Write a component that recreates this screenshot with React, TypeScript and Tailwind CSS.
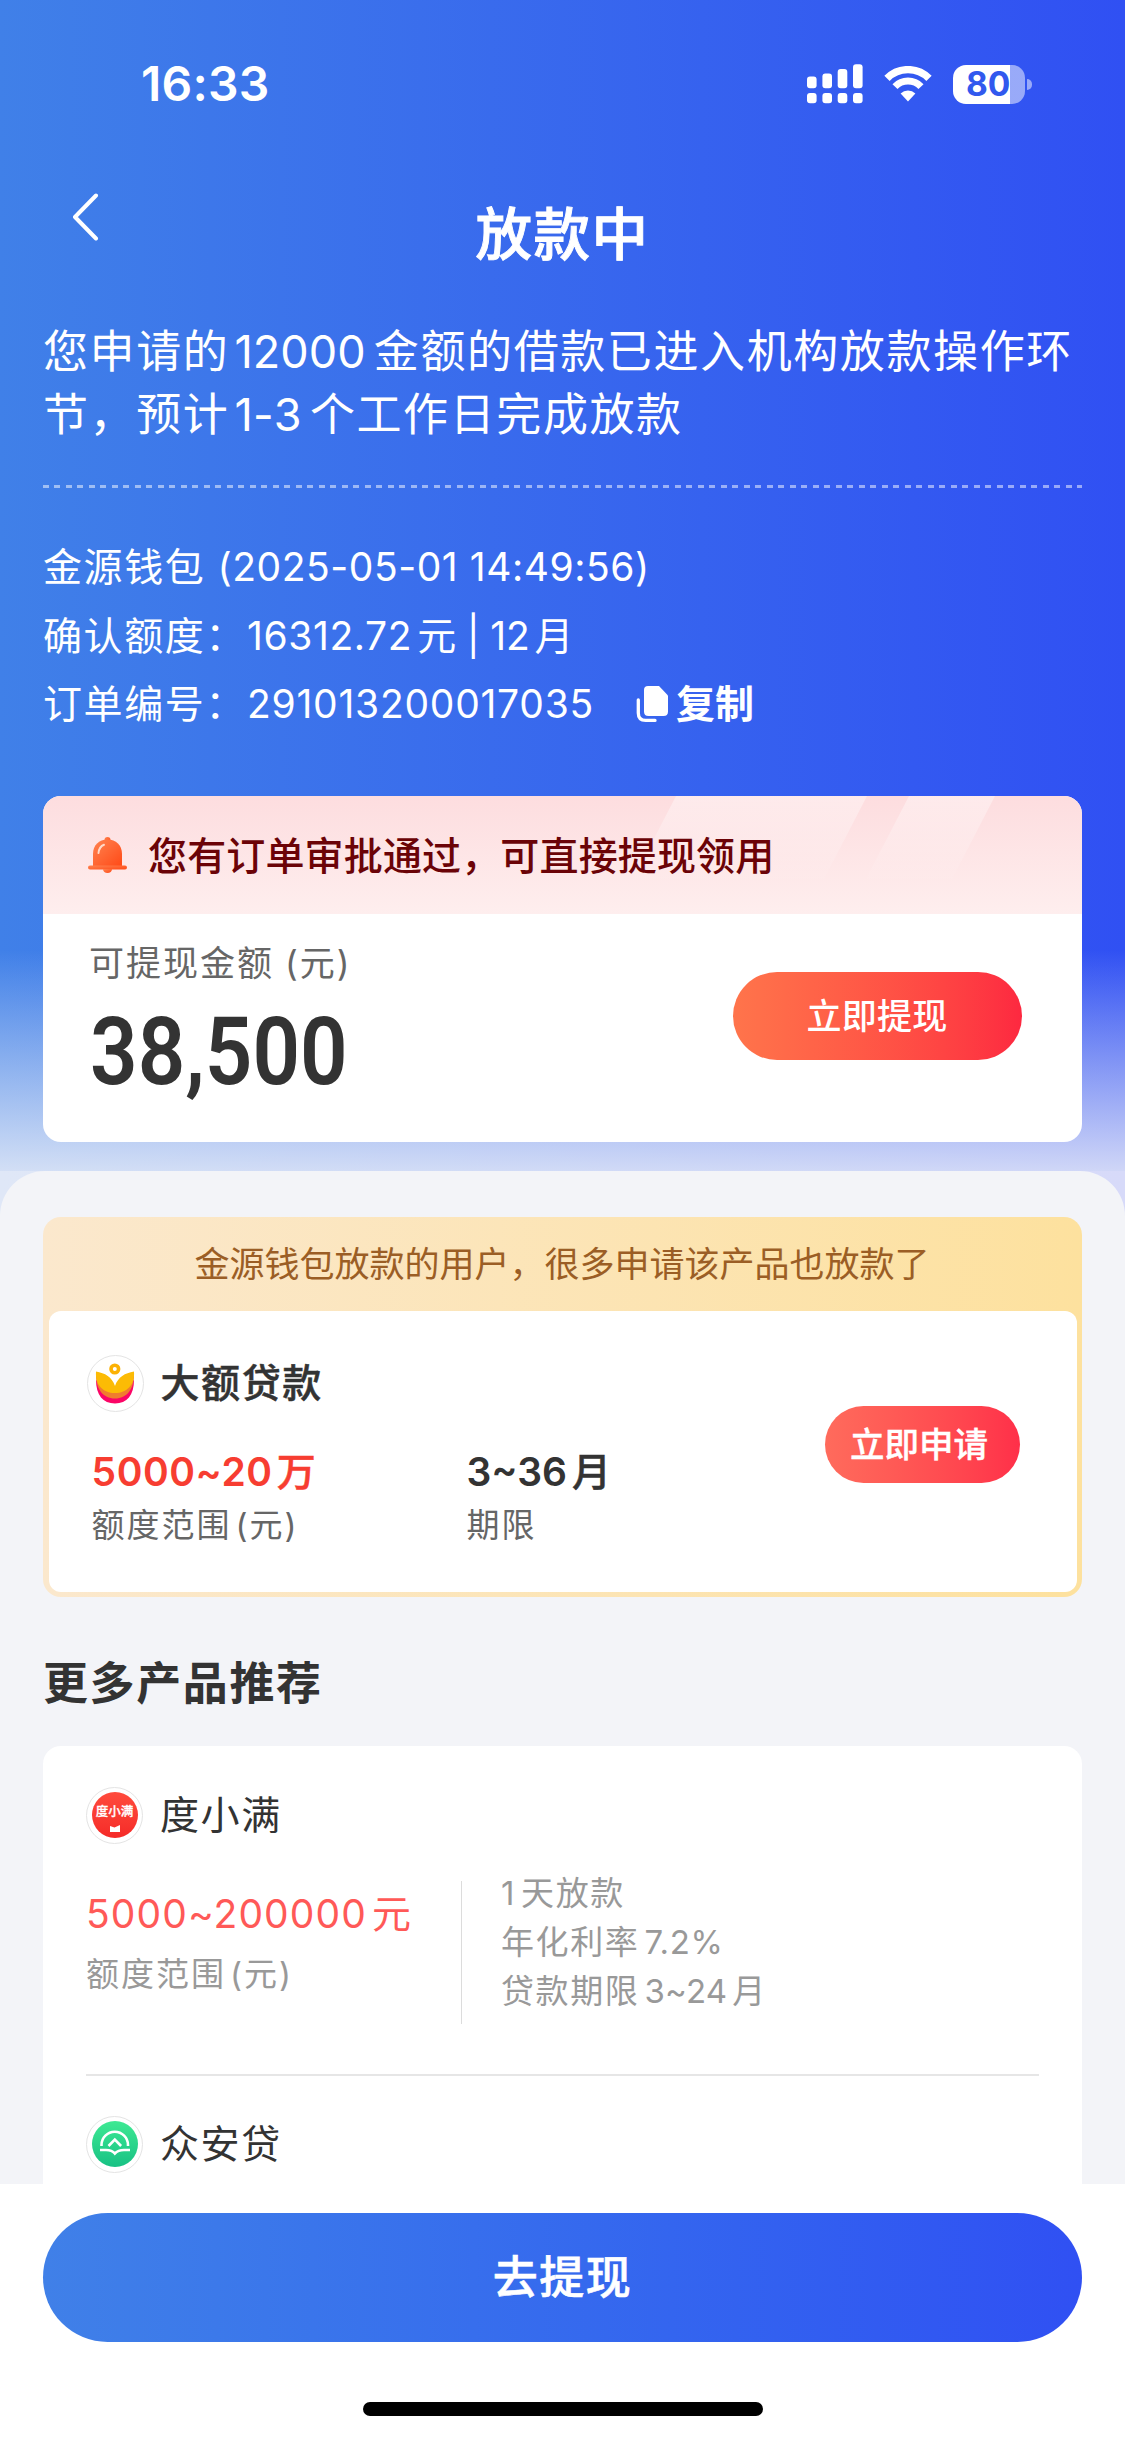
import React from "react";

const font = "font-['Inter','Noto_Sans_CJK_SC',sans-serif]";

function StatusBar() {
  return (
    <div className="flex h-[168px] items-center justify-between pr-[93px] pl-[141px] text-white">
      <div className="text-[48px] leading-none font-semibold tracking-[0.2px]">16:33</div>
      <div className="flex items-center">
        <svg width="56" height="40" viewBox="0 0 56 40" fill="#fff">
          <rect x="0" y="12.5" width="9.6" height="11.8" rx="3" />
          <rect x="15.4" y="9.5" width="9.6" height="14.8" rx="3" />
          <rect x="30.7" y="5" width="9.6" height="19.3" rx="3" />
          <rect x="46" y="0.3" width="9.6" height="24" rx="3" />
          <rect x="0" y="29" width="9.6" height="10.3" rx="3" />
          <rect x="15.4" y="29" width="9.6" height="10.3" rx="3" />
          <rect x="30.7" y="29" width="9.6" height="10.3" rx="3" />
          <rect x="46" y="29" width="9.6" height="10.3" rx="3" />
        </svg>
        <svg
          className="ml-[21px]"
          width="48"
          height="36"
          viewBox="0 0 48 36"
          fill="none"
          stroke="#fff"
        >
          <path d="M3 12.4 A29.5 29.5 0 0 1 45 12.4" strokeWidth="7.4" />
          <path d="M11 20.6 A18 18 0 0 1 37 20.6" strokeWidth="7" />
          <path
            d="M24 35.5 L16.6 27.6 A10.6 10.6 0 0 1 31.4 27.6 Z"
            fill="#fff"
            stroke="none"
          />
        </svg>
        <div className="ml-[21px] flex items-center gap-[2px]">
          <div className="flex h-[39px] w-[72px] items-center overflow-hidden rounded-[13px] bg-[linear-gradient(90deg,#fff_57px,#ffffff80_57px)] pt-[1px] pl-[13px] text-[33.5px] leading-none font-bold text-[#3159ee]">
            80
          </div>
          <div className="h-[11px] w-[5px] rounded-r-full bg-white/50" />
        </div>
      </div>
    </div>
  );
}

function Bell() {
  return (
    <svg width="39" height="36" viewBox="0 0 39 36">
      <defs>
        <linearGradient id="bell" x1="0" y1="0" x2="1" y2="1">
          <stop offset="0" stopColor="#ff8350" />
          <stop offset="1" stopColor="#ff4a17" />
        </linearGradient>
      </defs>
      <g fill="url(#bell)">
        <circle cx="19.5" cy="3" r="3" />
        <path d="M5 29 V17 C5 8 11 2.5 19.5 2.5 C28 2.5 34 8 34 17 V29 Z" />
        <rect x="0" y="28.5" width="39" height="4" rx="2" />
        <path d="M15 32 H24 C24 34.5 22 36 19.5 36 C17 36 15 34.5 15 32 Z" />
      </g>
      <path
        d="M10.5 16 C11 11.5 13 9 16 7.8"
        fill="none"
        stroke="#ffd9c8"
        strokeWidth="2"
        strokeLinecap="round"
      />
    </svg>
  );
}

function CopyIcon() {
  return (
    <svg width="32" height="37" viewBox="0 0 32 37">
      <path
        d="M12 0 H23 L32 9.5 V25.5 Q32 30 27.5 30 H12.5 Q8 30 8 25.5 V4 Q8 0 12 0 Z"
        fill="#fff"
      />
      <path
        d="M2.3 14 V27 Q2.3 34.4 9.7 34.4 H19"
        fill="none"
        stroke="#fff"
        strokeWidth="3.3"
        strokeLinecap="round"
      />
    </svg>
  );
}

function LogoFrame({ children }: { children: React.ReactNode }) {
  return (
    <div className="flex size-[57px] shrink-0 items-center justify-center rounded-full border-[1.5px] border-[#e4e4e4] bg-white">
      {children}
    </div>
  );
}

// Two petals with a coin above them, stacked on darker petals
function LotusLogo() {
  return (
    <svg width="46" height="46" viewBox="0 0 46 46">
      <path d="M4 20 C4 35 11 43.5 23 43.5 C35 43.5 42 35 42 20 L23 32 Z" fill="#fb0566" />
      <path d="M4 15 C4 29 11 38.5 23 38.5 C35 38.5 42 29 42 15 L23 30 Z" fill="#f07c2e" />
      <path
        d="M4 11.5 C13 13 20 17 23 26 C26 17 33 13 42 11.5 C43 25 35 33 23 33 C11 33 3 25 4 11.5 Z"
        fill="#fcbb05"
      />
      <circle cx="22.8" cy="9" r="3.8" fill="none" stroke="#fcb205" strokeWidth="3.6" />
    </svg>
  );
}

function DuxiaomanLogo() {
  return (
    <div className="flex size-[46px] flex-col items-center rounded-full bg-linear-to-b from-[#ff4a3c] to-[#f52a28] pt-[13px] text-white">
      <div className="text-[12.5px] leading-[14px] font-medium whitespace-nowrap [-webkit-text-stroke:0.3px]">
        度小满
      </div>
      <svg className="mt-[6px]" width="10" height="7" viewBox="0 0 10 7" fill="#fff">
        <path d="M0 1 L4.5 2.5 L10 0 V7 H0 Z" />
      </svg>
    </div>
  );
}

function ZhonganLogo() {
  return (
    <svg width="46" height="46" viewBox="0 0 46 46">
      <defs>
        <linearGradient id="zhongan" x1="0" y1="0" x2="0" y2="1">
          <stop offset="0" stopColor="#3ee993" />
          <stop offset="1" stopColor="#18c184" />
        </linearGradient>
      </defs>
      <circle cx="23" cy="23" r="23" fill="url(#zhongan)" />
      <g fill="none" stroke="#fff" strokeWidth="2.6">
        <path d="M9.5 25 V24 A13.2 13.2 0 0 1 36 24 V25" />
        <path d="M16.5 25 L22.8 18.5 L29.1 25" />
        <path d="M8 29 H14 Q20 29 22.8 32.5 Q26 29 32 29 H38" />
      </g>
    </svg>
  );
}

function CardHeader() {
  return (
    <div className="relative h-[118px] overflow-hidden bg-linear-to-b from-[#fddddf] to-[#feeeee]">
      <svg className="absolute top-0 left-0" width="1039" height="118" viewBox="0 0 1039 118">
        <defs>
          <linearGradient id="stripe" x1="0" y1="0" x2="0" y2="1">
            <stop offset="0" stopColor="#fff" stopOpacity="0.4" />
            <stop offset="0.75" stopColor="#fff" stopOpacity="0" />
          </linearGradient>
        </defs>
        <path d="M633 0 H824 L763 118 H572 Z" fill="url(#stripe)" />
        <path d="M866 0 H952 L891 118 H805 Z" fill="url(#stripe)" />
      </svg>
      <div className="relative flex h-[118px] items-center gap-[21px] pl-[45px]">
        <Bell />
        <div className="pt-[4px] text-[39px] font-medium tracking-[0.15px] text-[#6b0307]">
          您有订单审批通过，可直接提现领用
        </div>
      </div>
    </div>
  );
}

function LoanCard() {
  return (
    <div className="mx-[43px] mt-[20px] h-[346px] overflow-hidden rounded-[18px] bg-white">
      <CardHeader />
      <div className="flex h-[228px] items-start justify-between pr-[60px] pl-[46px]">
        <div>
          <div className="mt-[24px] text-[35px] leading-[50px] tracking-[2px] text-[#666]">
            可提现金额<span className="ml-[11px]">(元)</span>
          </div>
          <div className="mt-[17px] ml-[1px] origin-left scale-x-[0.887] font-['Roboto'] text-[94px] leading-[94px] font-semibold text-[#333]">
            38,500
          </div>
        </div>
        <button className="mt-[58px] h-[88px] w-[289px] rounded-full bg-linear-to-r from-[#ff744b] to-[#fd2840] pt-[2px] pr-[7px] text-[35px] font-medium tracking-[0.3px] text-white">
          <span className="ml-[6px]">立即提现</span>
        </button>
      </div>
    </div>
  );
}

function HotProduct() {
  return (
    <div className="mx-[43px] rounded-[18px] bg-linear-to-r from-[#fbe8cd] to-[#fde19e] px-[5.5px] pb-[5px]">
      <div className="flex h-[94px] items-center justify-center pr-[1px] text-[35px] text-[#9b5e25]">
        金源钱包放款的用户，很多申请该产品也放款了
      </div>
      <div className="flex h-[281px] justify-between rounded-[12px] bg-white pr-[57px] pl-[38px]">
        <div className="pt-[43px]">
          <div className="flex items-center gap-[17px]">
            <LogoFrame>
              <LotusLogo />
            </LogoFrame>
            <div className="text-[39px] leading-[58px] font-medium tracking-[1.6px] text-[#333] [-webkit-text-stroke:0.5px]">
              大额贷款
            </div>
          </div>
          <div className="mt-[32px] flex pl-[5px]">
            <div className="w-[375px]">
              <div className="text-[39px] leading-[56px] font-semibold text-[#f73d31]">
                <span className="mr-[4px] tracking-[0.6px]">5000~20</span>
                <span className="font-medium [-webkit-text-stroke:0.5px]">万</span>
              </div>
              <div className="text-[33px] leading-[50px] tracking-[2px] text-[#666]">
                额度范围<span className="ml-[4px]">(元)</span>
              </div>
            </div>
            <div>
              <div className="text-[39px] leading-[56px] font-semibold text-[#333]">
                <span className="mr-[5px]">3~36</span>
                <span className="font-medium [-webkit-text-stroke:0.5px]">月</span>
              </div>
              <div className="text-[33px] leading-[50px] tracking-[2px] text-[#666]">
                期限
              </div>
            </div>
          </div>
        </div>
        <button className="mt-[95px] h-[77px] w-[195px] rounded-full bg-linear-to-r from-[#ff6b5c] to-[#ff2f49] pr-[6px] text-[34.5px] font-medium text-white [-webkit-text-stroke:0.4px]">
          立即申请
        </button>
      </div>
    </div>
  );
}

function ProductName({ logo, name }: { logo: React.ReactNode; name: string }) {
  return (
    <div className="flex items-center gap-[17px]">
      <LogoFrame>{logo}</LogoFrame>
      <div className="text-[39px] leading-[58px] tracking-[1.6px] text-[#333]">{name}</div>
    </div>
  );
}

function ProductList() {
  return (
    <div className="mx-[43px] h-[500px] rounded-t-[18px] bg-white px-[43px] pt-[40px]">
      <ProductName logo={<DuxiaomanLogo />} name="度小满" />
      <div className="mt-[37px] flex h-[143px]">
        <div className="w-[376px] border-r border-[#dcdcdc]">
          <div className="mt-[5px] text-[39px] leading-[56px] text-[#ff5957]">
            <span className="mr-[5px] tracking-[1.1px]">5000~200000</span>元
          </div>
          <div className="mt-[7px] text-[33px] leading-[50px] tracking-[2px] text-[#999]">
            额度范围<span className="ml-[4px]">(元)</span>
          </div>
        </div>
        <div className="-mt-[12px] pl-[39px] text-[33px] leading-[49px] tracking-[1.6px] text-[#999]">
          <div>
            <span className="mr-[5px]">1</span>天放款
          </div>
          <div>
            年化利率<span className="ml-[5px] tracking-[0.6px]">7.2%</span>
          </div>
          <div>
            贷款期限<span className="mr-[5px] ml-[5px] tracking-[0.2px]">3~24</span>月
          </div>
        </div>
      </div>
      <div className="mt-[50px] mb-[39px] h-[2px] bg-[#e6e6e6]" />
      <ProductName logo={<ZhonganLogo />} name="众安贷" />
    </div>
  );
}

export default function App() {
  return (
    <div
      className={`flex h-[2439px] w-[1125px] flex-col overflow-hidden bg-[#f3f4f8] ${font}`}
    >
      {/* Blue area fading into the page colour */}
      <div className="h-[1171px] shrink-0 bg-[linear-gradient(180deg,#f3f4f800_950px,#f3f4f8_1220px),linear-gradient(90deg,#4080e8,#3050f3)]">
        <StatusBar />
        <div className="flex h-[132px] items-start px-[72px] pt-[25px] text-white">
          <svg
            width="27"
            height="48"
            viewBox="0 0 27 48"
            fill="none"
            stroke="#fff"
            strokeWidth="4"
            strokeLinecap="round"
            strokeLinejoin="round"
          >
            <path d="M24 2.5 L3 24 L24 45.5" />
          </svg>
          <div className="mt-[2px] mr-[27px] flex-1 text-center text-[56.5px] leading-[80px] font-medium tracking-[1.5px] [-webkit-text-stroke:0.9px]">
            放款中
          </div>
        </div>
        <div className="mx-[43px] mt-[20px] text-[45px] leading-[63px] tracking-[1.6px] whitespace-nowrap text-white">
          <div>
            您申请的<span className="mr-[8px] ml-[5px] tracking-[0.1px]">12000</span>
            金额的借款已进入机构放款操作环
          </div>
          <div>
            节，预计<span className="mr-[8px] ml-[5px] tracking-[0.4px]">1-3</span>
            个工作日完成放款
          </div>
        </div>
        <div className="mx-[43px] mt-[39px] h-[3px] bg-[repeating-linear-gradient(90deg,#ffffff80_0_6px,transparent_6px_11.49px)]" />
        <div className="mx-[43px] mt-[45px] text-[39px] leading-[68.5px] tracking-[1.6px] whitespace-nowrap text-white">
          <div>
            金源钱包
            <span className="ml-[12px] tracking-[0.55px]">(2025-05-01 14:49:56)</span>
          </div>
          <div>
            确认额度：
            <span className="mr-[5px] ml-[1px] tracking-[0.6px]">16312.72</span>元
            <span className="mr-[5px] ml-[9px] tracking-[-0.2px]">| 12</span>月
          </div>
          <div className="flex items-center">
            订单编号：
            <span className="ml-[1px] tracking-[0.75px]">291013200017035</span>
            <span className="ml-[42px]">
              <CopyIcon />
            </span>
            <span className="ml-[8px] font-semibold tracking-[0px]">复制</span>
          </div>
        </div>
        <div className="h-[37px]" />
        <LoanCard />
      </div>

      <div className="h-[1013px] bg-[linear-gradient(90deg,#dfe7f7,#d7daf9)]">
        <div className="h-full rounded-t-[45px] bg-[#f3f4f8] pt-[46px]">
          <HotProduct />
          <div className="px-[43px] pt-[54px] pb-[29px] text-[45px] leading-[66px] font-semibold tracking-[1.6px] text-[#333]">
            更多产品推荐
          </div>
          <ProductList />
        </div>
      </div>

      {/* Sticky footer */}
      <div className="flex h-[255px] shrink-0 flex-col items-center bg-white px-[43px] pt-[29px]">
        <button className="h-[129px] w-full rounded-full bg-linear-to-r from-[#4080e8] to-[#3050f3] text-[45px] font-medium tracking-[1.5px] text-white [-webkit-text-stroke:0.6px]">
          去提现
        </button>
        <div className="mt-[60px] h-[14px] w-[400px] rounded-full bg-black" />
      </div>
    </div>
  );
}
